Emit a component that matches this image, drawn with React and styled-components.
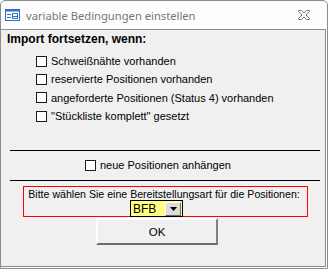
import React from 'react';
import styled, { createGlobalStyle } from 'styled-components';

const Global = createGlobalStyle`
  html, body { margin: 0; padding: 0; background: #ffffff; }
  body { width: 330px; height: 270px; overflow: hidden; }
`;

const Window = styled.div`
  box-sizing: border-box;
  width: 328px;
  height: 269px;
  border: 1px solid #8c8c8c;
  border-radius: 5px 5px 0 0;
  background: #fdfdfd;
  display: flex;
  flex-direction: column;
`;

const TitleBar = styled.div`
  height: 28px;
  display: flex;
  align-items: center;
  padding: 0 0 0 4px;
  gap: 6px;
  font-family: "Noto Sans", sans-serif;
  font-size: 11.2px;
  color: #767676;
`;

const TitleText = styled.span`
  flex: 1;
  white-space: nowrap;
`;

const CloseBox = styled.div`
  width: 24px;
  margin-right: 11px;
  display: flex;
  justify-content: center;
`;

const Panel = styled.div`
  flex: 1;
  margin: 0 1px 1px 0;
  border-top: 1px solid #8c8c8c;
  border-right: 1px solid #8c8c8c;
  border-bottom: 1px solid #8c8c8c;
  background: #f0f0f0;
  display: flex;
  flex-direction: column;
  font-family: "Liberation Sans", Arial, sans-serif;
  color: #000;
`;

const Heading = styled.div`
  margin: 3px 0 0 6px;
  font-size: 12px;
  font-weight: bold;
  line-height: 13px;
`;

const CheckList = styled.div`
  margin: 6px 0 0 35px;
  display: flex;
  flex-direction: column;
`;

const Row = styled.label`
  height: 18.3px;
  display: flex;
  align-items: center;
  gap: 4px;
  font-size: 11px;
  white-space: nowrap;
  padding-left: ${p => p.$indent || 0}px;
  margin-top: ${p => p.$top || 0}px;
`;

const Box = styled.span`
  box-sizing: border-box;
  width: 11px;
  height: 11px;
  border: 1px solid #1a1a1a;
  background: #ffffff;
  flex: none;
`;

const Rule = styled.div`
  margin: ${p => p.$top}px 0 0 9px;
  width: 310px;
  height: 1px;
  background: #000;
`;

const RedBox = styled.div`
  box-sizing: border-box;
  margin: 5px 0 0 22px;
  width: 285px;
  height: 31px;
  border: 1px solid #ff0000;
  display: flex;
  flex-direction: column;
  align-items: center;
`;

const Prompt = styled.div`
  font-size: 10.6px;
  line-height: 12px;
  margin: 1px 3px 0 0;
  white-space: nowrap;
`;

const Combo = styled.div`
  box-sizing: border-box;
  align-self: flex-start;
  margin: 0 0 -1px 106px;
  width: 53px;
  height: 18px;
  border: 1px solid #000;
  background: #ffff80;
  display: flex;
  align-items: center;
  justify-content: space-between;
  padding: 0 1px 0 2px;
  font-size: 12px;
`;

const DropButton = styled.div`
  box-sizing: border-box;
  width: 16px;
  height: 14px;
  background: #dcdcdc;
  border-top: 1px solid #ffffff;
  border-left: 1px solid #ffffff;
  border-right: 1px solid #6e6e6e;
  border-bottom: 1px solid #6e6e6e;
  display: flex;
  align-items: center;
  justify-content: center;
  padding-top: 1px;
`;

const OkButton = styled.button`
  box-sizing: border-box;
  margin: 1px 0 0 95px;
  width: 122px;
  height: 27px;
  background: #f0f0f0;
  border: none;
  border-top: 2px solid #ffffff;
  border-left: 2px solid #ffffff;
  border-right: 2px solid #808080;
  border-bottom: 2px solid #6a6a6a;
  font-family: "Liberation Sans", Arial, sans-serif;
  font-size: 11.5px;
  color: #000;
  padding: 0;
`;

const FormIcon = () => (
  <svg width="15" height="12" viewBox="0 0 15 12">
    <rect x="0.5" y="0.5" width="14" height="11" fill="#ffffff" stroke="#2f6fce" />
    <rect x="0.5" y="0.5" width="14" height="2" fill="#2f6fce" />
    <rect x="2" y="5" width="4" height="1" fill="#2f6fce" />
    <rect x="2" y="8" width="4" height="1" fill="#2f6fce" />
    <rect x="7.5" y="4.5" width="5" height="5" fill="none" stroke="#2f6fce" />
    <rect x="8" y="7" width="4" height="1" fill="#2f6fce" />
  </svg>
);

const CloseIcon = () => (
  <svg width="12" height="10" viewBox="0 0 12 10">
    <path
      d="M0.5 0.5 H3.5 L6 3 L8.5 0.5 H11.5 V1.5 L8 5 L11.5 8.5 V9.5 H8.5 L6 7 L3.5 9.5 H0.5 V8.5 L4 5 L0.5 1.5 Z"
      fill="#fcfcfc"
      stroke="#777777"
      strokeWidth="1"
      strokeLinejoin="miter"
    />
  </svg>
);

const Arrow = () => (
  <svg width="7" height="4" viewBox="0 0 7 4">
    <path d="M0 0 H7 L3.5 4 Z" fill="#000" />
  </svg>
);

const options = [
  'Schweißnähte vorhanden',
  'reservierte Positionen vorhanden',
  'angeforderte Positionen (Status 4) vorhanden',
  '"Stückliste komplett" gesetzt',
];

export default function App() {
  return (
    <>
      <Global />
      <Window>
        <TitleBar>
          <FormIcon />
          <TitleText>variable Bedingungen einstellen</TitleText>
          <CloseBox><CloseIcon /></CloseBox>
        </TitleBar>
        <Panel>
          <Heading>Import fortsetzen, wenn:</Heading>
          <CheckList>
            {options.map(o => (
              <Row key={o}><Box />{o}</Row>
            ))}
          </CheckList>
          <Rule $top={25} />
          <Row $indent={84} $top={5}><Box />neue Positionen anhängen</Row>
          <Rule $top={6} />
          <RedBox>
            <Prompt>Bitte wählen Sie eine Bereitstellungsart für die Positionen:</Prompt>
            <Combo>
              <span>BFB</span>
              <DropButton><Arrow /></DropButton>
            </Combo>
          </RedBox>
          <OkButton>OK</OkButton>
        </Panel>
      </Window>
    </>
  );
}
